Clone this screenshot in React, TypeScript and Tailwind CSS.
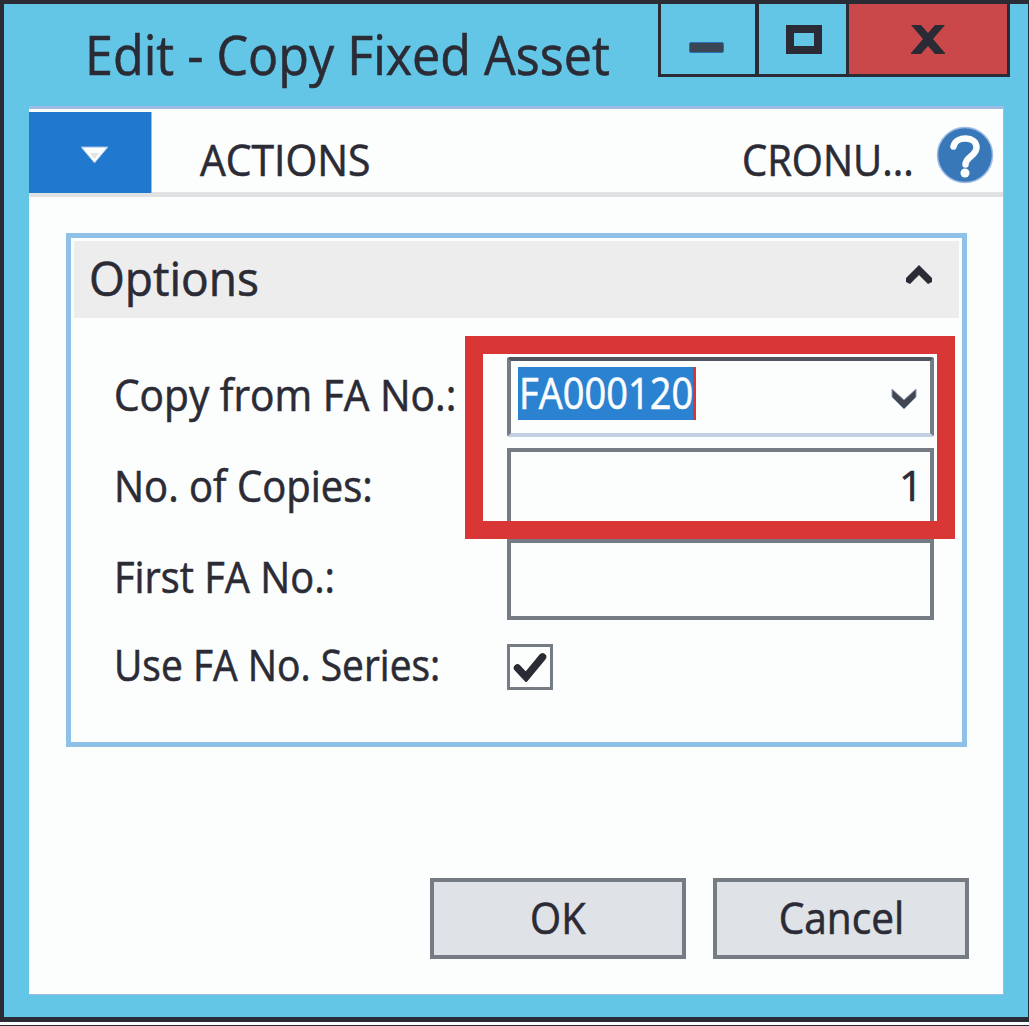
import type { ReactNode } from "react";

function TitleBar() {
  return (
    <header className="flex h-[102px] items-start">
      <h1 className="h-[80px] w-[654px] shrink-0 pl-[81px] pt-[15px]">
        <span className="inline-block origin-left scale-x-[0.93] whitespace-nowrap text-[54px] leading-[70px]">
          Edit - Copy Fixed Asset
        </span>
      </h1>
      <div className="flex h-[73px] w-[352px] border-x-[3px] border-b-[3px] border-[#2b2b35]">
        <button className="flex w-[98px] items-start border-r-4 border-[#2b2b35] pl-[28px] pt-[38px]" aria-label="Minimize">
          <span className="h-[11px] w-[35px] rounded-[2px] border border-[#2b70b4] bg-[#3b4654]" />
        </button>
        <button className="flex w-[90px] items-start border-r-[3px] border-[#2b2b35] pl-[27px] pt-[21px]" aria-label="Maximize">
          <span className="h-[29px] w-[36px] border-[8px] border-[#2b2b35]" />
        </button>
        <button className="flex flex-1 items-start bg-[#cb484a] pl-[62px] pt-[20px]" aria-label="Close">
          <svg width="34" height="31" viewBox="0 0 34 31" fill="#2b2b35">
            <path d="M0 1H10L17 9L24 1H34L22 15L34 29V30H24L17 22L10 30H0V29L12 15Z" />
          </svg>
        </button>
      </div>
    </header>
  );
}

function Toolbar() {
  return (
    <nav className="flex h-[91px] shrink-0 items-end border-b-[5px] border-t-[3px] border-b-[#e0e1e3] border-t-[#9dbbe4] bg-[#fcfdfd]">
      <button className="-mb-px flex h-[81px] w-[123px] items-start border-r border-[#9dbbe4] bg-[#2079cf] pl-[52px] pt-[34px]" aria-label="Menu">
        <svg width="28" height="18" viewBox="0 0 28 18">
          <path d="M0 1H27L13.5 17Z" fill="#fcfdfd" stroke="#9dbbe4" strokeWidth="1" />
          <path d="M9 7H18L13.5 13Z" fill="#e2e3e5" />
        </svg>
      </button>
      <div className="flex h-[81px] flex-1 items-start pl-[48px] pt-[27px]">
        <span className="w-[542px] whitespace-nowrap">
          <span className="inline-block origin-left scale-x-[0.95] text-[43px] leading-[44px]">ACTIONS</span>
        </span>
        <span className="w-[195px] whitespace-nowrap">
          <span className="inline-block origin-left scale-x-[0.93] text-[43px] leading-[44px]">CRONU...</span>
        </span>
        <svg className="-ml-px -mt-[12px] shrink-0" width="58" height="58" viewBox="0 0 58 58" fill="none">
          <circle cx="29" cy="29" r="27.5" fill="#3978b8" stroke="#9dbbe4" strokeWidth="1.5" />
          <path d="M17.5 20.5C20 9.500 40.500 10 40.500 21.500C40.500 30 29.500 31 29.500 38.500" stroke="#fcfdfd" strokeWidth="6.500" strokeLinecap="round" />
          <circle cx="29" cy="47" r="4.5" fill="#fcfdfd" />
        </svg>
      </div>
    </nav>
  );
}

function Row({ label, height, scale, children }: { label: string; height: string; scale: string; children: ReactNode }) {
  return (
    <div className={`flex items-start ${height}`}>
      <label className="w-[393px] shrink-0 whitespace-nowrap pt-[16px]">
        <span className={`inline-block origin-left text-[43px] leading-[44px] ${scale}`}>{label}</span>
      </label>
      {children}
    </div>
  );
}

function DialogButton({ children }: { children: ReactNode }) {
  return (
    <button className="flex h-[81px] w-[256px] items-start justify-center border-4 border-[#757c84] bg-[#dfe2e6] pt-[11px]">
      {children}
    </button>
  );
}

export default function App() {
  return (
    <div className="flex h-[1026px] w-[1029px] flex-col overflow-hidden border-b border-[#2b2b35] bg-[#fcfdfd] font-['Open_Sans','Noto_Sans',sans-serif] text-[#2b2b35] [-webkit-text-stroke:0.6px_currentColor]">
      <div className="flex h-[1022px] flex-col border-b-[5px] border-l-4 border-r border-t-4 border-[#2b2b35] bg-[#64c6e6]">
        <TitleBar />
        <main className="ml-[25px] flex h-[889px] w-[975px] flex-col border-b border-r border-[#9dbbe4] bg-[#fcfdfd]">
          <Toolbar />
          <div className="flex flex-1 flex-col pl-[37px] pt-[36px]">
            <section className="relative h-[514px] w-[901px] shrink-0 border-[5px] border-[#8ec0e8] p-[3px]">
              <div className="flex h-[77px] items-start justify-between bg-[#ededee] pl-[15px] pr-[26px] pt-[12px]">
                <h2 className="origin-left scale-x-[0.96] whitespace-nowrap text-[48px] leading-[50px]">Options</h2>
                <svg className="mt-[12px]" width="28" height="20" viewBox="0 0 28 20" fill="#2b2b35">
                  <path d="M14 0L27 13V17L23 19L14 10L5 19L1 17V13Z" />
                </svg>
              </div>
              <div className="pl-[40px] pt-[39px]">
                <Row label="Copy from FA No.:" height="h-[91px]" scale="scale-x-[0.945]">
                  <div className="flex h-[80px] w-[427px] items-start justify-between rounded-[3px] border-4 border-b-[#c3d0e4] border-l-[#757c84] border-r-[#757c84] border-t-[#50565f] pl-[7px] pr-[12px] pt-[6px]">
                    <span className="h-[53px] w-[178px] whitespace-nowrap border-r-[3px] border-[#d93636] bg-[#2b82d1] pl-px pt-[4px] text-[#fcfdfd]">
                      <span className="inline-block origin-left scale-x-[0.885] text-[43px] leading-[44px]">FA000120</span>
                    </span>
                    <svg className="mt-[21px]" width="28" height="23" viewBox="0 0 28 23">
                      <path d="M2 1L14 12L26 1V9L14 21L2 9Z" fill="#41454f" stroke="#8b9cb6" strokeWidth="1" />
                    </svg>
                  </div>
                </Row>
                <Row label="No. of Copies:" height="h-[91px]" scale="scale-x-[0.93]">
                  <div className="h-[80px] w-[427px] border-4 border-[#757c84] pr-[7px] pt-[11px] text-right text-[42px] leading-[44px]">1</div>
                </Row>
                <Row label="First FA No.:" height="h-[88px]" scale="scale-x-[0.925]">
                  <div className="h-[81px] w-[427px] border-4 border-[#757c84]" />
                </Row>
                <Row label="Use FA No. Series:" height="h-[70px]" scale="scale-x-[0.905]">
                  <div className="mt-[17px] flex h-[46px] w-[46px] items-center justify-center border-[3px] border-[#757c84]">
                    <svg width="34" height="30" viewBox="0 0 34 30">
                      <path d="M4.500 16L13 25L29.500 5" fill="none" stroke="#2b2b35" strokeWidth="7.500" strokeLinecap="round" />
                    </svg>
                  </div>
                </Row>
              </div>
              <div className="absolute left-[394px] top-[98px] h-[203px] w-[490px] border-[18px] border-[#d93636]" />
            </section>
            <footer className="mt-[131px] flex gap-[27px] pl-[364px]">
              <DialogButton>
                <span className="inline-block scale-x-[0.93] text-[43px] leading-[50px]">OK</span>
              </DialogButton>
              <DialogButton>
                <span className="inline-block scale-x-[0.945] text-[43px] leading-[50px]">Cancel</span>
              </DialogButton>
            </footer>
          </div>
        </main>
      </div>
    </div>
  );
}
